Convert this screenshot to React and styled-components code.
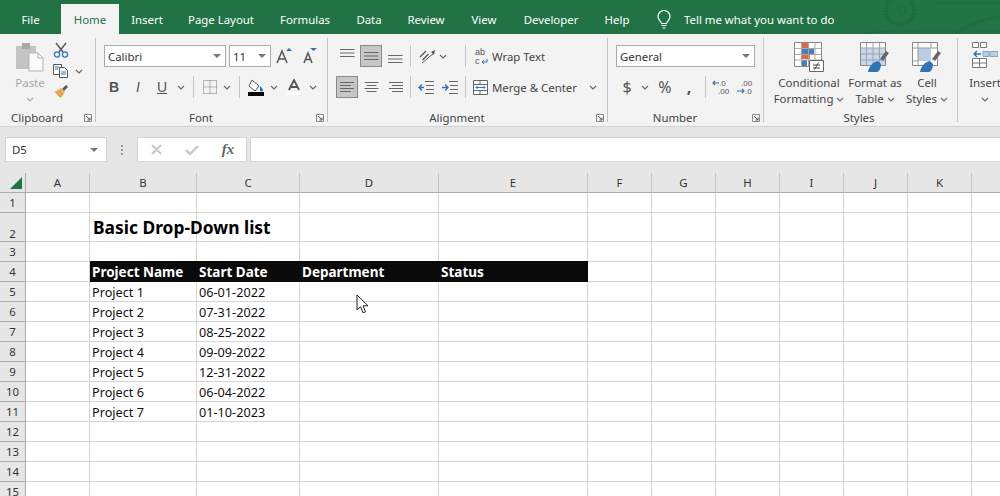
import React from "react";
import styled, { createGlobalStyle } from "styled-components";

const GREEN = "#217346";
const UI_FONT = '"Noto Sans", "Open Sans", sans-serif';
const CELL_FONT = '"Noto Sans", "Open Sans", sans-serif';

const tabs = [
  ["File", 61], ["Home", 58, true], ["Insert", 56], ["Page Layout", 92], ["Formulas", 76],
  ["Data", 52], ["Review", 62], ["View", 54], ["Developer", 80], ["Help", 52],
];

// the last column runs off the window, its letter is not in view
const columns = [
  ["A", 64], ["B", 107], ["C", 103], ["D", 139], ["E", 149], ["F", 64],
  ["G", 64], ["H", 64], ["I", 64], ["J", 64], ["K", 64], ["", 64],
];

const projects = [
  ["Project 1", "06-01-2022"], ["Project 2", "07-31-2022"], ["Project 3", "08-25-2022"],
  ["Project 4", "09-09-2022"], ["Project 5", "12-31-2022"], ["Project 6", "06-04-2022"],
  ["Project 7", "01-10-2023"],
];

const rowHeights = { 2: 29 };
const rows = Array.from({ length: 15 }, (_, i) => i + 1);
const headerRow = { B: "Project Name", C: "Start Date", D: "Department", E: "Status" };

function cellFor(row, col) {
  if (row === 2 && col === "B") return <Title>Basic Drop-Down list</Title>;
  if (row === 4) return headerRow[col] || "";
  const project = projects[row - 5];
  if (!project) return "";
  if (col === "B") return project[0];
  if (col === "C") return project[1];
  return "";
}

const Caret = ({ color = "#666" }) => (
  <svg width="8" height="5" viewBox="0 0 8 5"><path d="M1 1l3 3 3-3" fill="none" stroke={color} strokeWidth="1.1" /></svg>
);

const DownTriangle = () => (
  <svg width="8" height="4" viewBox="0 0 8 4"><path d="M0 0h8L4 4z" fill="#777" /></svg>
);

const Launcher = () => (
  <svg width="8" height="8" viewBox="0 0 8 8">
    <path d="M.5 7.5V.5h7v7z" fill="none" stroke="#8a8a8a" />
    <path d="M2 2l4 4M6 3.5V6H3.5" fill="none" stroke="#555" />
  </svg>
);

const PasteIcon = () => (
  <svg width="30" height="30" viewBox="0 0 30 30">
    <path d="M1 4h20v23H1z" fill="#c4c4c4" />
    <path d="M7 1h8v6H7z" fill="#a8a8a8" />
    <path d="M14 11h9l5 5v13H14z" fill="#fafafa" stroke="#b5b5b5" />
    <path d="M23 11v5h5" fill="none" stroke="#b5b5b5" />
  </svg>
);

const ScissorsIcon = () => (
  <svg width="16" height="16" viewBox="0 0 16 16">
    <path d="M3 1l7 9M13 1L6 10" stroke="#555" strokeWidth="1.4" fill="none" />
    <circle cx="4" cy="12.5" r="2.6" fill="none" stroke="#2f75b5" strokeWidth="1.3" />
    <circle cx="12" cy="12.5" r="2.6" fill="none" stroke="#2f75b5" strokeWidth="1.3" />
  </svg>
);

const CopyIcon = () => (
  <svg width="16" height="14" viewBox="0 0 16 14">
    <path d="M.5.5h8v10h-8z" fill="#fff" stroke="#555" />
    <path d="M6.5 3.5h5l3 3v7h-8z" fill="#fff" stroke="#555" />
    <path d="M2 3h4M2 5h3M8 8h5M8 10h5" stroke="#2f75b5" />
  </svg>
);

const BrushIcon = () => (
  <svg width="16" height="16" viewBox="0 0 16 16">
    <path d="M9 6l4-4 2 2-4 4z" fill="#555" />
    <path d="M8 5l4 4-4 6-7-6z" fill="#eeb35c" />
    <path d="M4 9l3 5M6.5 8l3 4" stroke="#c88a2e" />
  </svg>
);

const GrowFont = ({ down }) => (
  <svg width="18" height="16" viewBox="0 0 18 16">
    <path d={down ? "M4 15L8 5l4 10M5.5 11.5h5" : "M1 15L6 3l5 12M3 11h6"} fill="none" stroke="#555" strokeWidth="1.5" />
    <path d={down ? "M10 0h7l-3.5 3z" : "M10 3l3-3 3 3z"} fill="#2f75b5" />
  </svg>
);

const BordersIcon = () => (
  <svg width="14" height="14" viewBox="0 0 14 14">
    <path d="M.5.5h13v13H.5zM7 .5v13M.5 7h13" fill="none" stroke="#777" strokeDasharray="1 1" />
  </svg>
);

const FillIcon = () => (
  <svg width="18" height="17" viewBox="0 0 18 17">
    <path d="M5 1l7 6-4 5-6-5z" fill="#fff" stroke="#555" />
    <path d="M13 7c2 2 3 3 3 4a1.5 1.5 0 01-3 0z" fill="#2f75b5" />
    <path d="M1 13h16v4H1z" fill="#000" />
  </svg>
);

const FontColorIcon = () => (
  <svg width="16" height="16" viewBox="0 0 16 16">
    <path d="M3 11L8 1l5 10M4.8 8h6.4" fill="none" stroke="#555" strokeWidth="1.8" />
    <path d="M1 13h14v3H1z" fill="#fff" />
  </svg>
);

const LinesIcon = ({ align = "left" }) => (
  <svg width="15" height="14" viewBox="0 0 15 14">
    {[2, 5, 8, 11].map((ly, i) => {
      const w = i % 2 ? (align === "center" ? 10 : 11) : 14;
      const start = align === "right" ? 15 - w : align === "center" ? (15 - w) / 2 : 0;
      return <path key={ly} d={`M${start} ${ly + 0.5}h${w}`} stroke="#666" />;
    })}
  </svg>
);

const VAlignIcon = ({ y }) => (
  <svg width="15" height="14" viewBox="0 0 15 14">
    {[0, 3.5, 7].map(d => <path key={d} d={`M0 ${y + d + 0.5}h14.5`} stroke="#666" />)}
  </svg>
);

const OrientIcon = () => (
  <svg width="18" height="16" viewBox="0 0 18 16">
    <path d="M2 9l6-6M4.5 12l6-6" stroke="#555" strokeWidth="1.3" />
    <path d="M4 15l12-10" stroke="#555" />
    <path d="M17 2l-1 5-3-3z" fill="#555" />
  </svg>
);

const IndentIcon = ({ flip }) => (
  <svg width="16" height="13" viewBox="0 0 16 13">
    <path d="M7 .5h9M8 4.5h8M8 8.5h8M7 12.5h9" stroke="#666" />
    {flip
      ? <path d="M0 6.5h5M3 3.5l3 3-3 3" stroke="#2f75b5" strokeWidth="1.4" fill="none" />
      : <path d="M1 6.5h5M4 3.5l-3 3 3 3" stroke="#2f75b5" strokeWidth="1.4" fill="none" />}
  </svg>
);

const WrapIcon = () => (
  <svg width="13" height="17" viewBox="0 0 13 17">
    <text x="0" y="7" fontSize="9" fontFamily="Liberation Sans" fill="#555">ab</text>
    <text x="0" y="16" fontSize="9" fontFamily="Liberation Sans" fill="#555">c</text>
    <path d="M12 11v3H7M9 12l-2 2 2 2" fill="none" stroke="#2f75b5" />
  </svg>
);

const MergeIcon = () => (
  <svg width="15" height="15" viewBox="0 0 15 15">
    <path d="M.5.5h14v14H.5zM.5 4.5h14M.5 10.5h14M7 .5v4M7 10.5v4" fill="#fff" stroke="#666" />
    <path d="M3 7.5h9M4.5 6l-1.5 1.5L4.5 9M10.5 6L12 7.5 10.5 9" fill="none" stroke="#2f75b5" />
  </svg>
);

const DecimalIcon = ({ more }) => (
  <svg width="18" height="16" viewBox="0 0 18 16">
    <text x={more ? 5 : 7} y="6.5" fontSize="8" fontFamily="Liberation Sans" fill="#555">{more ? ".00" : ".0"}</text>
    <text x={more ? 9 : 6} y="15" fontSize="8" fontFamily="Liberation Sans" fill="#555">{more ? ".0" : ".00"}</text>
    <path d={more ? "M1 12h7M6 10l2 2-2 2" : "M1 4h6M3 2L1 4l2 2"} fill="none" stroke="#2f75b5" strokeWidth="1.2" />
  </svg>
);

const ConditionalIcon = () => (
  <svg width="30" height="30" viewBox="0 0 30 30">
    <path d="M.5.5h27v24H.5z" fill="#fff" stroke="#888" />
    <path d="M8 1h6v5H8z" fill="#e2673f" />
    <path d="M8 7h12v5H8z" fill="#4a7ebb" />
    <path d="M8 13h8v4H8z" fill="#e2673f" />
    <path d="M8 18h5v6H8z" fill="#4a7ebb" />
    <path d="M7.5 1v24M14.5 1v24M21 1v24M1 6.5h26M1 12.5h26M1 18h26" stroke="#a9a9a9" fill="none" />
    <path d="M15.5 18.5h14v11h-14z" fill="#fff" stroke="#666" />
    <path d="M19 23h7M19 26h7M24.5 20.5l-4 7" stroke="#444" fill="none" />
  </svg>
);

const TableIcon = ({ plain }) => (
  <svg width="30" height="30" viewBox="0 0 30 30">
    <path d="M.5.5h25v23H.5z" fill="#fff" stroke="#888" />
    <path d="M1 6h24v17H1z" fill={plain ? "#fff" : "#c9d6e6"} />
    {plain && <path d="M6 6h13v13H6z" fill="#b9cde5" />}
    {!plain && <path d="M6.5 1v22M13 1v22M19.5 1v22M1 6h24M1 12h24M1 18h24" stroke="#9aa5b1" fill="none" />}
    {plain && <path d="M6 1v22M19 1v5M1 6h24M1 19h5" stroke="#9a9a9a" fill="none" />}
    <path d="M20 17l6-8 3 2-6 8z" fill="#666" />
    <path d="M8 30c1-6 5-10 10-11l3 3c0 4-2 8-4 8z" fill="#2f75b5" />
  </svg>
);

const InsertIcon = () => (
  <svg width="26" height="30" viewBox="0 0 26 30">
    <path d="M.5.5h6v5h-6zM8.5.5h6v5h-6zM.5 16.5h14v9H.5zM7.5 16.5v9M.5 21h14" fill="#fff" stroke="#777" />
    <path d="M11 9.5h6v5h-6zM18 9.5h8v5h-8z" fill="#b9cde5" stroke="#8fa5bd" />
    <path d="M9 12H2M5 9l-3 3 3 3" fill="none" stroke="#2f75b5" strokeWidth="1.4" />
  </svg>
);

const Bulb = () => (
  <svg width="14" height="19" viewBox="0 0 14 19">
    <path d="M4.5 13.5C4 11 1 10 1 6.5a6 6 0 0112 0c0 3.5-3 4.5-3.5 7z" fill="none" stroke="#fff" strokeWidth="1.2" />
    <path d="M4.5 15.5h5M5.5 18h3" stroke="#fff" strokeWidth="1.2" />
  </svg>
);

const CancelMark = () => (
  <svg width="13" height="13" viewBox="0 0 13 13">
    <path d="M2 2l9 9M11 2l-9 9" stroke="#c8c8c8" strokeWidth="2" />
  </svg>
);

const CheckMark = () => (
  <svg width="14" height="12" viewBox="0 0 14 12">
    <path d="M1 6l4 4 8-8" fill="none" stroke="#c8c8c8" strokeWidth="2.4" />
  </svg>
);

const Watermark = () => (
  <WatermarkArt width="140" height="34" viewBox="0 0 140 34">
    <g fill="none" stroke="#1c693e" strokeDasharray="1.5 1.5">
      <circle cx="40" cy="10" r="14" strokeWidth="4" />
      <circle cx="42" cy="10" r="4" strokeWidth="2" />
      <path d="M76 3h64" strokeWidth="2.5" />
      <path d="M2 33c40-3 90-3 138-2" strokeWidth="1.5" />
      <path d="M96 34c10-8 24-14 44-17" strokeWidth="3" />
    </g>
  </WatermarkArt>
);

const Pointer = () => (
  <PointerArt width="14" height="20" viewBox="0 0 14 20">
    <path d="M1 1v15l3.5-3.2 2.5 6 2.5-1-2.5-6H12z" fill="#fff" stroke="#222" />
  </PointerArt>
);

export default function App() {
  return (
    <Page>
      <GlobalStyle />
      <TabBar>
        {tabs.map(([name, width, active]) => (
          <Tab key={name} $width={width} $active={active}>{name}</Tab>
        ))}
        <TellMe><Bulb /><span>Tell me what you want to do</span></TellMe>
        <Watermark />
      </TabBar>

      <Ribbon>
        <Group $width={96}>
          <GroupBody $row $pad={14} $top={4}>
            <LargeButton $width={32} $muted>
              <PasteIcon />
              <LargeLabel>Paste</LargeLabel>
              <CaretLine><Caret color="#aaa" /></CaretLine>
            </LargeButton>
            <SmallStack>
              <SmallTool><ScissorsIcon /></SmallTool>
              <SmallTool><CopyIcon /><ToolCaret><Caret /></ToolCaret></SmallTool>
              <SmallTool><BrushIcon /></SmallTool>
            </SmallStack>
          </GroupBody>
          <GroupFoot><FootLabel>Clipboard</FootLabel><Launcher /></GroupFoot>
        </Group>

        <Group $width={232}>
          <GroupBody $pad={8}>
            <ToolRow>
              <Select $width={122}>Calibri<DownTriangle /></Select>
              <Select $width={42} $gap={3}>11<DownTriangle /></Select>
              <Tool $width={24} $gap={2}><GrowFont /></Tool>
              <Tool $width={24}><GrowFont down /></Tool>
            </ToolRow>
            <ToolRow $shift={-2}>
              <Tool $width={24}><FontMark $bold>B</FontMark></Tool>
              <Tool $width={24}><FontMark $italic>I</FontMark></Tool>
              <Tool $width={24}><FontMark $under>U</FontMark></Tool>
              <Tool $width={14}><Caret /></Tool>
              <RowDivider />
              <Tool $width={21}><BordersIcon /></Tool>
              <Tool $width={14}><Caret /></Tool>
              <RowDivider />
              <Tool $width={22}><FillIcon /></Tool>
              <Tool $width={14}><Caret /></Tool>
              <Tool $width={26}><FontColorIcon /></Tool>
              <Tool $width={12}><Caret /></Tool>
            </ToolRow>
          </GroupBody>
          <GroupFoot><FootLabel>Font</FootLabel><Launcher /></GroupFoot>
        </Group>

        <Group $width={280}>
          <GroupBody $pad={8}>
            <ToolRow>
              <Tool $width={22}><VAlignIcon y={0} /></Tool>
              <Tool $width={22} $gap={2} $pressed><VAlignIcon y={3} /></Tool>
              <Tool $width={22} $gap={2}><VAlignIcon y={6} /></Tool>
              <RowDivider $left={4} />
              <Tool $width={22}><OrientIcon /></Tool>
              <Tool $width={10}><Caret /></Tool>
              <RowDivider $left={17} $right={9} />
              <WrapIcon />
              <TextTool>Wrap Text</TextTool>
            </ToolRow>
            <ToolRow>
              <Tool $width={22} $pressed><LinesIcon /></Tool>
              <Tool $width={22} $gap={2}><LinesIcon align="center" /></Tool>
              <Tool $width={22} $gap={2}><LinesIcon align="right" /></Tool>
              <RowDivider $left={4} />
              <Tool $width={20}><IndentIcon /></Tool>
              <Tool $width={20} $gap={4}><IndentIcon flip /></Tool>
              <RowDivider $left={5} $right={7} />
              <MergeIcon />
              <TextTool>Merge &amp; Center</TextTool>
              <CaretGap><Caret /></CaretGap>
            </ToolRow>
          </GroupBody>
          <GroupFoot><FootLabel>Alignment</FootLabel><Launcher /></GroupFoot>
        </Group>

        <Group $width={156}>
          <GroupBody $pad={8}>
            <ToolRow>
              <Select $width={139}>General<DownTriangle /></Select>
            </ToolRow>
            <ToolRow>
              <Tool $width={22}><NumberMark>$</NumberMark></Tool>
              <Tool $width={14}><Caret /></Tool>
              <Tool $width={24} $gap={1}><NumberMark>%</NumberMark></Tool>
              <Tool $width={24}><NumberMark $bold>,</NumberMark></Tool>
              <RowDivider $left={4} />
              <Tool $width={20}><DecimalIcon /></Tool>
              <Tool $width={20} $gap={4}><DecimalIcon more /></Tool>
            </ToolRow>
          </GroupBody>
          <GroupFoot><FootLabel>Number</FootLabel><Launcher /></GroupFoot>
        </Group>

        <Group $width={194}>
          <GroupBody $row $pad={10} $top={4}>
            <LargeButton $width={70}>
              <ConditionalIcon />
              <LargeLabel>Conditional</LargeLabel>
              <LargeLabel>Formatting <Caret /></LargeLabel>
            </LargeButton>
            <LargeButton $width={62}>
              <TableIcon />
              <LargeLabel>Format as</LargeLabel>
              <LargeLabel>Table <Caret /></LargeLabel>
            </LargeButton>
            <LargeButton $width={42}>
              <TableIcon plain />
              <LargeLabel>Cell</LargeLabel>
              <LargeLabel>Styles <Caret /></LargeLabel>
            </LargeButton>
          </GroupBody>
          <GroupFoot><FootLabel>Styles</FootLabel></GroupFoot>
        </Group>

        <LastGroup>
          <LargeButton $width={32}>
            <InsertIcon />
            <LargeLabel>Insert</LargeLabel>
            <CaretLine><Caret /></CaretLine>
          </LargeButton>
        </LastGroup>
      </Ribbon>

      <FormulaBar>
        <NameBox>D5<DownTriangle /></NameBox>
        <Grip />
        <FormulaButtons>
          <FormulaGlyph><CancelMark /></FormulaGlyph>
          <FormulaGlyph><CheckMark /></FormulaGlyph>
          <FormulaGlyph>fx</FormulaGlyph>
        </FormulaButtons>
        <FormulaInput />
      </FormulaBar>

      <Sheet>
        <Corner><CornerMark /></Corner>
        {columns.map(([name]) => <ColHead key={name}>{name}</ColHead>)}
        {rows.map(row => (
          <React.Fragment key={row}>
            <RowHead $tall={row === 2}>{row}</RowHead>
            {columns.map(([name]) => {
              const black = row === 4 && "BCDE".includes(name) && name !== "";
              const hasTitle = row === 2 && name === "B";
              return <Cell key={name} $black={black} $tall={row === 2} $front={hasTitle}>{cellFor(row, name)}</Cell>;
            })}
          </React.Fragment>
        ))}
        <Pointer />
      </Sheet>
    </Page>
  );
}

const GlobalStyle = createGlobalStyle`
  html, body {
    margin: 0;
    background: #fff;
    overflow: hidden;
  }
  * {
    box-sizing: border-box;
  }
`;

const Page = styled.div`
  width: 1000px;
  height: 496px;
  overflow: hidden;
  font-family: ${UI_FONT};
  background: #e6e6e6;
`;

const TabBar = styled.div`
  position: relative;
  display: flex;
  align-items: flex-end;
  height: 34px;
  background: ${GREEN};
`;

const Tab = styled.div`
  display: flex;
  align-items: center;
  justify-content: center;
  width: ${p => p.$width}px;
  height: 30px;
  font-size: 11.4px;
  color: ${p => (p.$active ? GREEN : "#fff")};
  background: ${p => (p.$active ? "#f3f3f3" : "transparent")};
`;

const TellMe = styled.div`
  display: flex;
  align-items: center;
  gap: 13px;
  height: 30px;
  margin-left: 14px;
  font-size: 11.4px;
  color: #fff;
`;

const WatermarkArt = styled.svg`
  position: absolute;
  top: 0;
  right: 0;
`;

const Ribbon = styled.div`
  display: flex;
  height: 93px;
  background: #f3f3f3;
  border-bottom: 1px solid #d2d2d2;
  overflow: hidden;
`;

const Group = styled.div`
  display: flex;
  flex: none;
  flex-direction: column;
  width: ${p => p.$width}px;
  margin: 4px 0;
  border-right: 1px solid #c6c6c6;
`;

const LastGroup = styled.div`
  display: flex;
  flex: 1;
  padding: 8px 0 0 11px;
`;

const GroupBody = styled.div`
  display: flex;
  flex: none;
  flex-direction: ${p => (p.$row ? "row" : "column")};
  gap: ${p => (p.$row ? 0 : 9)}px;
  height: 62px;
  padding: ${p => p.$top ?? 7}px 0 0 ${p => p.$pad}px;
`;

const GroupFoot = styled.div`
  display: flex;
  align-items: center;
  height: 14px;
  margin-top: auto;
  margin-bottom: -3px;
  padding-right: 3px;
`;

const FootLabel = styled.div`
  flex: 1;
  padding-right: 10px;
  font-size: 11.4px;
  line-height: 14px;
  text-align: center;
  color: #444;
  &:last-child {
    padding-right: 0;
  }
`;

const ToolRow = styled.div`
  display: flex;
  align-items: center;
  height: 22px;
  margin-left: ${p => p.$shift || 0}px;
`;

const Select = styled.div`
  display: flex;
  align-items: center;
  justify-content: space-between;
  width: ${p => p.$width}px;
  height: 22px;
  margin-left: ${p => p.$gap || 0}px;
  padding: 0 4px 0 3px;
  font-size: 11.4px;
  color: #333;
  background: #fff;
  border: 1px solid #ababab;
`;

const Tool = styled.div`
  display: flex;
  flex: none;
  align-items: center;
  justify-content: center;
  width: ${p => p.$width}px;
  height: 22px;
  margin-left: ${p => p.$gap || 0}px;
  background: ${p => (p.$pressed ? "#c6c6c6" : "transparent")};
  border: 1px solid ${p => (p.$pressed ? "#8a8a8a" : "transparent")};
`;

const RowDivider = styled.div`
  flex: none;
  width: 1px;
  height: 22px;
  margin: 0 ${p => p.$right ?? 5}px 0 ${p => p.$left ?? 5}px;
  background: #c6c6c6;
`;

const FontMark = styled.span`
  font-family: "Liberation Sans", sans-serif;
  font-size: 14px;
  color: #555;
  font-weight: ${p => (p.$bold ? 700 : 400)};
  font-style: ${p => (p.$italic ? "italic" : "normal")};
  text-decoration: ${p => (p.$under ? "underline" : "none")};
`;

const NumberMark = styled.span`
  font-size: 16px;
  font-weight: ${p => (p.$bold ? 700 : 400)};
  color: #555;
`;

const TextTool = styled.span`
  margin-left: 4px;
  font-size: 11.4px;
  color: #444;
  white-space: nowrap;
`;

const CaretGap = styled.span`
  display: flex;
  margin-left: 12px;
`;

const LargeButton = styled.div`
  display: flex;
  flex: none;
  flex-direction: column;
  align-items: center;
  width: ${p => p.$width}px;
  color: ${p => (p.$muted ? "#a6a6a6" : "#444")};
  > svg {
    flex: none;
  }
`;

const LargeLabel = styled.div`
  display: flex;
  flex: none;
  align-items: center;
  gap: 3px;
  height: 16px;
  font-size: 11.4px;
  line-height: 16px;
  white-space: nowrap;
  &:nth-child(2) {
    margin-top: 3px;
  }
`;

const CaretLine = styled.div`
  display: flex;
  flex: none;
  align-items: center;
  height: 16px;
`;

const SmallStack = styled.div`
  display: flex;
  flex-direction: column;
  gap: 3px;
  margin: -1px 0 0 7px;
`;

const SmallTool = styled.div`
  position: relative;
  display: flex;
  align-items: center;
  width: 16px;
  height: 19px;
`;

const ToolCaret = styled.span`
  position: absolute;
  left: 22px;
  top: 7px;
  display: flex;
`;

const FormulaBar = styled.div`
  display: flex;
  align-items: flex-start;
  height: 46px;
  padding: 10px 0 0 5px;
  background: #e6e6e6;
`;

const NameBox = styled.div`
  display: flex;
  align-items: center;
  justify-content: space-between;
  width: 102px;
  height: 25px;
  padding: 0 8px 0 6px;
  font-size: 11.4px;
  color: #333;
  background: #fff;
  border: 1px solid #d4d4d4;
`;

const Grip = styled.div`
  width: 2px;
  height: 10px;
  margin: 8px 14px 0 14px;
  background: repeating-linear-gradient(to bottom, #999 0 2px, transparent 2px 4px);
`;

const FormulaButtons = styled.div`
  display: flex;
  align-items: center;
  width: 110px;
  height: 25px;
  background: #fff;
  border: 1px solid #d4d4d4;
`;

const FormulaGlyph = styled.span`
  display: flex;
  align-items: center;
  justify-content: center;
  width: 36px;
  font-family: "Liberation Serif", serif;
  font-size: 15px;
  font-style: italic;
  font-weight: 700;
  color: #666;
`;

const FormulaInput = styled.div`
  flex: 1;
  height: 25px;
  margin-left: 3px;
  background: #fff;
  border: 1px solid #d4d4d4;
  border-right: 0;
`;

const Sheet = styled.div`
  position: relative;
  display: grid;
  grid-template-columns: 26px ${columns.map(c => `${c[1]}px`).join(" ")};
  grid-template-rows: 20px ${rows.map(r => `${rowHeights[r] || 20}px`).join(" ")};
  background: #fff;
  font-family: ${CELL_FONT};
`;

const Corner = styled.div`
  position: relative;
  background: #e6e6e6;
  border-right: 1px solid #ababab;
  border-bottom: 1px solid #ababab;
`;

const CornerMark = styled.div`
  position: absolute;
  right: 3px;
  bottom: 3px;
  width: 0;
  height: 0;
  border-left: 12px solid transparent;
  border-bottom: 12px solid ${GREEN};
`;

const ColHead = styled.div`
  display: flex;
  align-items: center;
  justify-content: center;
  font-size: 11.4px;
  color: #333;
  background: #e6e6e6;
  border-right: 1px solid #c6c6c6;
  border-bottom: 1px solid #ababab;
`;

const RowHead = styled.div`
  display: flex;
  align-items: ${p => (p.$tall ? "flex-end" : "center")};
  justify-content: center;
  font-size: 11.4px;
  color: #333;
  background: #e6e6e6;
  border-right: 1px solid #ababab;
  border-bottom: 1px solid #ababab;
`;

const Cell = styled.div`
  z-index: ${p => (p.$front ? 1 : 0)};
  display: flex;
  align-items: ${p => (p.$tall ? "flex-end" : "center")};
  padding: 1px 0 0 2px;
  font-size: ${p => (p.$black ? 13.5 : 12.7)}px;
  font-weight: ${p => (p.$black ? 700 : 400)};
  white-space: nowrap;
  color: ${p => (p.$black ? "#fff" : "#111")};
  background: ${p => (p.$black ? "#0a0a0a" : "#fff")};
  border-right: 1px solid ${p => (p.$black ? "#0a0a0a" : "#d4d4d4")};
  border-bottom: 1px solid ${p => (p.$black ? "#0a0a0a" : "#d4d4d4")};
  box-shadow: ${p => (p.$black ? "0 -1px 0 #0a0a0a" : "none")};
`;

const Title = styled.span`
  padding: 0 0 2px 1px;
  font-size: 17.4px;
  font-weight: 700;
  color: #000;
`;

const PointerArt = styled.svg`
  position: absolute;
  left: 356px;
  top: 121px;
  z-index: 2;
`;
